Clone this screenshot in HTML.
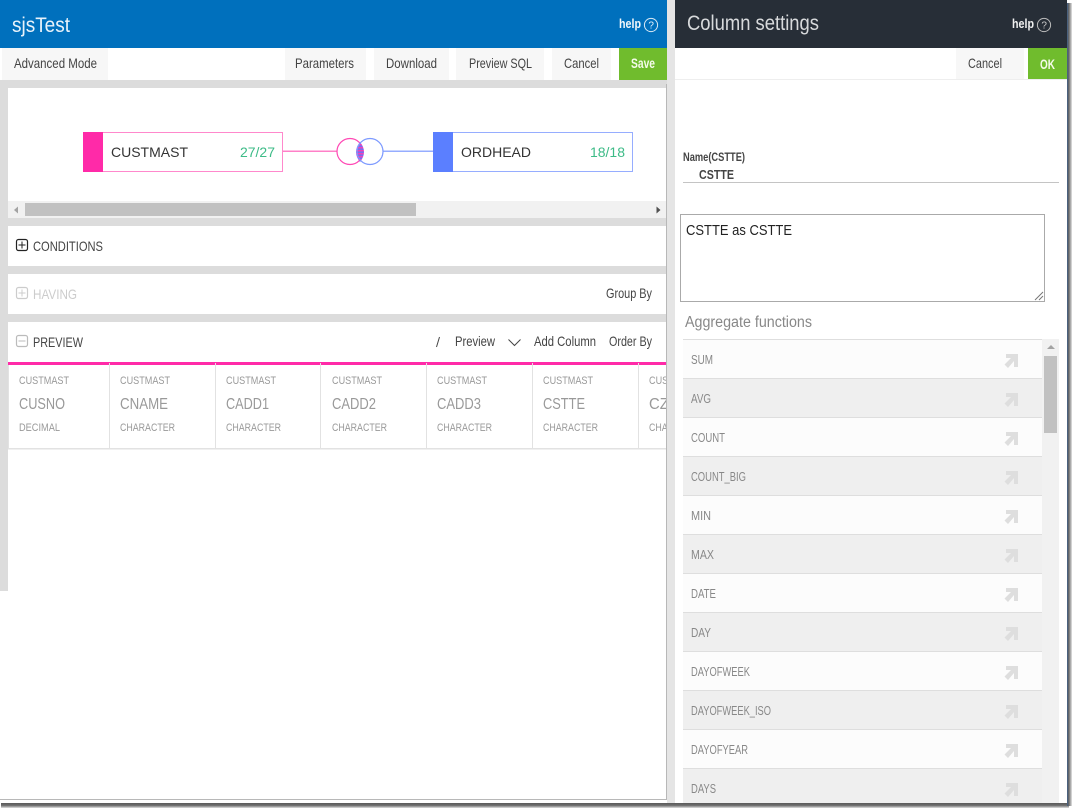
<!DOCTYPE html>
<html><head><meta charset="utf-8"><title>sjsTest</title>
<style>
html,body{margin:0;padding:0;background:#fff;width:1077px;height:812px;overflow:hidden}
svg{display:block}
text{font-family:"Liberation Sans",sans-serif;font-size:12px;fill:#444}
.b{font-weight:bold}
.g{font-size:11px;fill:#999}
.n{font-size:16px;fill:#999}
.f{font-size:12.5px;fill:#888}
.t{font-size:14px;fill:#444}
</style></head><body>
<svg width="1077" height="812" viewBox="0 0 1077 812" xmlns="http://www.w3.org/2000/svg">
<defs>
<linearGradient id="sb" x1="0" y1="0" x2="0" y2="1"><stop offset="0" stop-color="#5a5a5a"/><stop offset=".5" stop-color="#6e6e6e"/><stop offset="1" stop-color="#e0e0e0"/></linearGradient>
<linearGradient id="sr" x1="0" y1="0" x2="1" y2="0"><stop offset="0" stop-color="#3f5f88"/><stop offset=".35" stop-color="#666"/><stop offset="1" stop-color="#e4e4e4"/></linearGradient>
<pattern id="hatch" width="4" height="3" patternUnits="userSpaceOnUse"><rect width="4" height="3" fill="#7a6cf0"/><rect width="4" height="1.4" fill="#f040b8"/></pattern>
<clipPath id="cols"><rect x="8" y="362" width="658" height="90"/></clipPath>
<clipPath id="list"><rect x="683" y="339" width="376" height="464"/></clipPath>
</defs>

<!-- shadow -->
<rect x="1" y="803" width="1068" height="5" fill="url(#sb)"/>
<rect x="1067" y="3" width="5" height="803" fill="url(#sr)"/>

<!-- left panel -->
<rect x="0" y="0" width="667" height="48" fill="#0070bd"/>
<rect x="0" y="80" width="667" height="8" fill="#dcdcdc"/>
<rect x="0" y="88" width="8" height="503" fill="#dcdcdc"/>
<rect x="8" y="218" width="658" height="8" fill="#dcdcdc"/>
<rect x="8" y="266" width="658" height="8" fill="#dcdcdc"/>
<rect x="8" y="314" width="658" height="8" fill="#dcdcdc"/>
<rect x="666" y="84" width="1" height="716" fill="#b8b8b8"/>
<rect x="0" y="799" width="667" height="1" fill="#b8b8b8"/>
<rect x="667" y="0" width="8" height="803" fill="#e5e5e5"/>

<text x="12" y="32" textLength="58" lengthAdjust="spacingAndGlyphs" style="font-size:21px;fill:#e8f2fa">sjsTest</text>
<text class="b" x="619" y="28" textLength="22" lengthAdjust="spacingAndGlyphs" style="fill:#f2f7fb;font-size:13px">help</text>
<circle cx="651" cy="25" r="6.6" fill="none" stroke="#d8e8f4" stroke-width="1"/>
<text x="648.4" y="28.6" style="font-size:10px;fill:#e8f2fa">?</text>

<!-- toolbar -->
<rect x="2" y="48" width="106" height="32" fill="#f7f7f7"/>
<rect x="285" y="48" width="81" height="32" fill="#f7f7f7"/>
<rect x="374" y="48" width="75" height="32" fill="#f7f7f7"/>
<rect x="456" y="48" width="88" height="32" fill="#f7f7f7"/>
<rect x="552" y="48" width="59" height="32" fill="#f7f7f7"/>
<rect x="619" y="48" width="48" height="32" fill="#70bc2d"/>
<text class="t" x="14" y="68" textLength="83" lengthAdjust="spacingAndGlyphs">Advanced Mode</text>
<text class="t" x="295" y="68" textLength="59" lengthAdjust="spacingAndGlyphs">Parameters</text>
<text class="t" x="386" y="68" textLength="51" lengthAdjust="spacingAndGlyphs">Download</text>
<text class="t" x="469" y="68" textLength="63" lengthAdjust="spacingAndGlyphs">Preview SQL</text>
<text class="t" x="564" y="68" textLength="35" lengthAdjust="spacingAndGlyphs">Cancel</text>
<text class="b" x="631" y="68" textLength="24" lengthAdjust="spacingAndGlyphs" style="font-size:13.5px;fill:#f4fbe9">Save</text>

<!-- diagram -->
<rect x="83.5" y="132.5" width="199" height="39" fill="#fff" stroke="#ff88cc"/>
<rect x="83" y="132" width="20" height="40" fill="#ff2aa8"/>
<text x="111" y="157" textLength="77" lengthAdjust="spacingAndGlyphs" style="font-size:14px;fill:#333">CUSTMAST</text>
<text x="240" y="157" textLength="35" lengthAdjust="spacingAndGlyphs" style="font-size:14px;fill:#3dbb87">27/27</text>
<line x1="283" y1="151.300" x2="337" y2="151.300" stroke="#ff80c8" stroke-width="1.5"/>
<line x1="383" y1="151.300" x2="433" y2="151.300" stroke="#96adff" stroke-width="1.500"/>
<circle cx="350" cy="151.500" r="13" fill="#fff" stroke="#ff48b4" stroke-width="1.200"/>
<path d="M360 142 Q352 152 360 162 Q368 152 360 142 Z" fill="url(#hatch)"/>
<circle cx="370" cy="151.500" r="13" fill="none" stroke="#7d9aff" stroke-width="1.200"/>
<rect x="433.5" y="132.5" width="199" height="39" fill="#fff" stroke="#96adff"/>
<rect x="433" y="132" width="20" height="40" fill="#5b7fff"/>
<text x="461" y="157" textLength="70" lengthAdjust="spacingAndGlyphs" style="font-size:14px;fill:#333">ORDHEAD</text>
<text x="590" y="157" textLength="35" lengthAdjust="spacingAndGlyphs" style="font-size:14px;fill:#3dbb87">18/18</text>

<!-- h scrollbar -->
<rect x="8" y="201" width="658" height="17" fill="#f1f1f1"/>
<rect x="25" y="203" width="391" height="13" fill="#c1c1c1"/>
<path d="M18 206.500 V213.500 L14 210 Z" fill="#a3a3a3"/>
<path d="M656.500 206.500 V213.500 L660.500 210 Z" fill="#505050"/>

<!-- sections -->
<rect x="16.5" y="239.5" width="11" height="11" rx="2" fill="none" stroke="#222" stroke-width="1.200"/>
<path d="M18.500 245 H25.500 M22 241.500 V248.500" stroke="#222" fill="none"/>
<text class="t" x="33" y="251" textLength="70" lengthAdjust="spacingAndGlyphs">CONDITIONS</text>

<rect x="16.5" y="287.5" width="11" height="11" rx="2" fill="none" stroke="#ccc" stroke-width="1.200"/>
<path d="M18.500 293 H25.500 M22 289.500 V296.500" stroke="#ccc" fill="none"/>
<text class="t" x="33" y="299" textLength="44" lengthAdjust="spacingAndGlyphs" style="fill:#ccc">HAVING</text>
<text class="t" x="606" y="298" textLength="46" lengthAdjust="spacingAndGlyphs">Group By</text>

<rect x="16.5" y="335.5" width="11" height="11" rx="2" fill="none" stroke="#bbb" stroke-width="1.200"/>
<path d="M18.500 341 H25.500" stroke="#bbb" fill="none"/>
<text class="t" x="33" y="347" textLength="50" lengthAdjust="spacingAndGlyphs">PREVIEW</text>
<path d="M436.5 347 L439.5 337" stroke="#444" fill="none"/>
<text class="t" x="455" y="346" textLength="40" lengthAdjust="spacingAndGlyphs">Preview</text>
<path d="M508.5 339.5 L514.5 345.5 L520.5 339.5" stroke="#444" fill="none"/>
<text class="t" x="534" y="346" textLength="62" lengthAdjust="spacingAndGlyphs">Add Column</text>
<text class="t" x="609" y="346" textLength="43" lengthAdjust="spacingAndGlyphs">Order By</text>

<!-- columns -->
<rect x="8" y="362" width="658" height="3" fill="#ff2aa8"/>
<g fill="#e2e2e2">
<rect x="8" y="365" width="1" height="84"/><rect x="109" y="363" width="1" height="86"/><rect x="215" y="363" width="1" height="86"/><rect x="320" y="363" width="1" height="86"/><rect x="426" y="363" width="1" height="86"/><rect x="532" y="363" width="1" height="86"/><rect x="638" y="363" width="1" height="86"/>
<rect x="8" y="448" width="658" height="1.5"/>
</g>
<g clip-path="url(#cols)">
<text class="g" x="19" y="384" textLength="50" lengthAdjust="spacingAndGlyphs">CUSTMAST</text>
<text class="n" x="19" y="409" textLength="46" lengthAdjust="spacingAndGlyphs">CUSNO</text>
<text class="g" x="19" y="431" textLength="41" lengthAdjust="spacingAndGlyphs">DECIMAL</text>
<text class="g" x="120" y="384" textLength="50" lengthAdjust="spacingAndGlyphs">CUSTMAST</text>
<text class="n" x="120" y="409" textLength="48" lengthAdjust="spacingAndGlyphs">CNAME</text>
<text class="g" x="120" y="431" textLength="55" lengthAdjust="spacingAndGlyphs">CHARACTER</text>
<text class="g" x="226" y="384" textLength="50" lengthAdjust="spacingAndGlyphs">CUSTMAST</text>
<text class="n" x="226" y="409" textLength="43" lengthAdjust="spacingAndGlyphs">CADD1</text>
<text class="g" x="226" y="431" textLength="55" lengthAdjust="spacingAndGlyphs">CHARACTER</text>
<text class="g" x="332" y="384" textLength="50" lengthAdjust="spacingAndGlyphs">CUSTMAST</text>
<text class="n" x="332" y="409" textLength="44" lengthAdjust="spacingAndGlyphs">CADD2</text>
<text class="g" x="332" y="431" textLength="55" lengthAdjust="spacingAndGlyphs">CHARACTER</text>
<text class="g" x="437" y="384" textLength="50" lengthAdjust="spacingAndGlyphs">CUSTMAST</text>
<text class="n" x="437" y="409" textLength="44" lengthAdjust="spacingAndGlyphs">CADD3</text>
<text class="g" x="437" y="431" textLength="55" lengthAdjust="spacingAndGlyphs">CHARACTER</text>
<text class="g" x="543" y="384" textLength="50" lengthAdjust="spacingAndGlyphs">CUSTMAST</text>
<text class="n" x="543" y="409" textLength="42" lengthAdjust="spacingAndGlyphs">CSTTE</text>
<text class="g" x="543" y="431" textLength="55" lengthAdjust="spacingAndGlyphs">CHARACTER</text>
<text class="g" x="649" y="384" textLength="50" lengthAdjust="spacingAndGlyphs">CUSTMAST</text>
<text class="n" x="649" y="409" textLength="42" lengthAdjust="spacingAndGlyphs">CZIP1</text>
<text class="g" x="649" y="431" textLength="55" lengthAdjust="spacingAndGlyphs">CHARACTER</text>
</g>

<!-- right panel -->
<rect x="675" y="0" width="392" height="48" fill="#272e37"/>
<text x="687" y="30" textLength="132" lengthAdjust="spacingAndGlyphs" style="font-size:21px;fill:#d8dadc">Column settings</text>
<text class="b" x="1012" y="28" textLength="22" lengthAdjust="spacingAndGlyphs" style="fill:#f0f0f0;font-size:13px">help</text>
<circle cx="1044" cy="25" r="6.6" fill="none" stroke="#bbb" stroke-width="1"/>
<text x="1041.4" y="28.6" style="font-size:10px;fill:#ccc">?</text>
<rect x="956" y="48" width="68" height="31" fill="#f7f7f7"/>
<rect x="1028" y="48" width="39" height="31" fill="#70bc2d"/>
<rect x="675" y="79" width="392" height="1" fill="#eeeeee"/>
<text class="t" x="968" y="68" textLength="34" lengthAdjust="spacingAndGlyphs">Cancel</text>
<text class="b" x="1040" y="69" textLength="15" lengthAdjust="spacingAndGlyphs" style="font-size:13.500px;fill:#f4fbe9">OK</text>

<text class="b" x="683" y="161" textLength="62" lengthAdjust="spacingAndGlyphs" style="font-size:11.500px;fill:#444">Name(CSTTE)</text>
<text class="b" x="699" y="179" textLength="35" lengthAdjust="spacingAndGlyphs" style="font-size:12.500px;fill:#444">CSTTE</text>
<rect x="683" y="182" width="376" height="1" fill="#c4c4c4"/>

<rect x="680.5" y="214.5" width="364" height="87" fill="#fff" stroke="#aaa"/>
<text x="686" y="235" textLength="106" lengthAdjust="spacingAndGlyphs" style="font-size:15px;fill:#222">CSTTE as CSTTE</text>
<path d="M1035 300 L1043 292 M1039 300 L1043 296" stroke="#777" fill="none"/>

<text x="685" y="327" textLength="127" lengthAdjust="spacingAndGlyphs" style="font-size:15.500px;fill:#888">Aggregate functions</text>

<!-- list -->
<rect x="1042" y="339" width="17" height="464" fill="#f1f1f1"/>
<rect x="1044" y="356" width="13" height="77" fill="#c1c1c1"/>
<path d="M1047 349 H1055 L1051 345 Z" fill="#a3a3a3"/>
<g clip-path="url(#list)">
<rect x="683" y="339" width="359" height="39" fill="#fcfcfc"/>
<rect x="683" y="378" width="359" height="39" fill="#efefef"/>
<rect x="683" y="417" width="359" height="39" fill="#fcfcfc"/>
<rect x="683" y="456" width="359" height="39" fill="#efefef"/>
<rect x="683" y="495" width="359" height="39" fill="#fcfcfc"/>
<rect x="683" y="534" width="359" height="39" fill="#efefef"/>
<rect x="683" y="573" width="359" height="39" fill="#fcfcfc"/>
<rect x="683" y="612" width="359" height="39" fill="#efefef"/>
<rect x="683" y="651" width="359" height="39" fill="#fcfcfc"/>
<rect x="683" y="690" width="359" height="39" fill="#efefef"/>
<rect x="683" y="729" width="359" height="39" fill="#fcfcfc"/>
<rect x="683" y="768" width="359" height="39" fill="#efefef"/>
<g fill="#dedede">
<rect x="683" y="339" width="359" height="1"/><rect x="683" y="378" width="359" height="1"/><rect x="683" y="417" width="359" height="1"/><rect x="683" y="456" width="359" height="1"/><rect x="683" y="495" width="359" height="1"/><rect x="683" y="534" width="359" height="1"/><rect x="683" y="573" width="359" height="1"/><rect x="683" y="612" width="359" height="1"/><rect x="683" y="651" width="359" height="1"/><rect x="683" y="690" width="359" height="1"/><rect x="683" y="729" width="359" height="1"/><rect x="683" y="768" width="359" height="1"/>
</g>
<text class="f" x="691" y="364" textLength="22" lengthAdjust="spacingAndGlyphs">SUM</text>
<text class="f" x="691" y="403" textLength="20" lengthAdjust="spacingAndGlyphs">AVG</text>
<text class="f" x="691" y="442" textLength="34" lengthAdjust="spacingAndGlyphs">COUNT</text>
<text class="f" x="691" y="481" textLength="55" lengthAdjust="spacingAndGlyphs">COUNT_BIG</text>
<text class="f" x="691" y="520" textLength="20" lengthAdjust="spacingAndGlyphs">MIN</text>
<text class="f" x="691" y="559" textLength="23" lengthAdjust="spacingAndGlyphs">MAX</text>
<text class="f" x="691" y="598" textLength="25" lengthAdjust="spacingAndGlyphs">DATE</text>
<text class="f" x="691" y="637" textLength="20" lengthAdjust="spacingAndGlyphs">DAY</text>
<text class="f" x="691" y="676" textLength="59" lengthAdjust="spacingAndGlyphs">DAYOFWEEK</text>
<text class="f" x="691" y="715" textLength="80" lengthAdjust="spacingAndGlyphs">DAYOFWEEK_ISO</text>
<text class="f" x="691" y="754" textLength="57" lengthAdjust="spacingAndGlyphs">DAYOFYEAR</text>
<text class="f" x="691" y="793" textLength="25" lengthAdjust="spacingAndGlyphs">DAYS</text>
<g fill="#dedede">
<path d="M1006 354 h12 v13 h-4 v-6 l-6 7 -3.500 -3.500 6.500 -6.500 h-5 z"/>
<path d="M1006 393 h12 v13 h-4 v-6 l-6 7 -3.500 -3.500 6.500 -6.500 h-5 z"/>
<path d="M1006 432 h12 v13 h-4 v-6 l-6 7 -3.500 -3.500 6.500 -6.500 h-5 z"/>
<path d="M1006 471 h12 v13 h-4 v-6 l-6 7 -3.500 -3.500 6.500 -6.500 h-5 z"/>
<path d="M1006 510 h12 v13 h-4 v-6 l-6 7 -3.500 -3.500 6.500 -6.500 h-5 z"/>
<path d="M1006 549 h12 v13 h-4 v-6 l-6 7 -3.500 -3.500 6.500 -6.500 h-5 z"/>
<path d="M1006 588 h12 v13 h-4 v-6 l-6 7 -3.500 -3.500 6.500 -6.500 h-5 z"/>
<path d="M1006 627 h12 v13 h-4 v-6 l-6 7 -3.500 -3.500 6.500 -6.500 h-5 z"/>
<path d="M1006 666 h12 v13 h-4 v-6 l-6 7 -3.500 -3.500 6.500 -6.500 h-5 z"/>
<path d="M1006 705 h12 v13 h-4 v-6 l-6 7 -3.500 -3.500 6.500 -6.500 h-5 z"/>
<path d="M1006 744 h12 v13 h-4 v-6 l-6 7 -3.500 -3.500 6.500 -6.500 h-5 z"/>
<path d="M1006 783 h12 v13 h-4 v-6 l-6 7 -3.500 -3.500 6.500 -6.500 h-5 z"/>
</g>
</g>
</svg>
</body></html>
